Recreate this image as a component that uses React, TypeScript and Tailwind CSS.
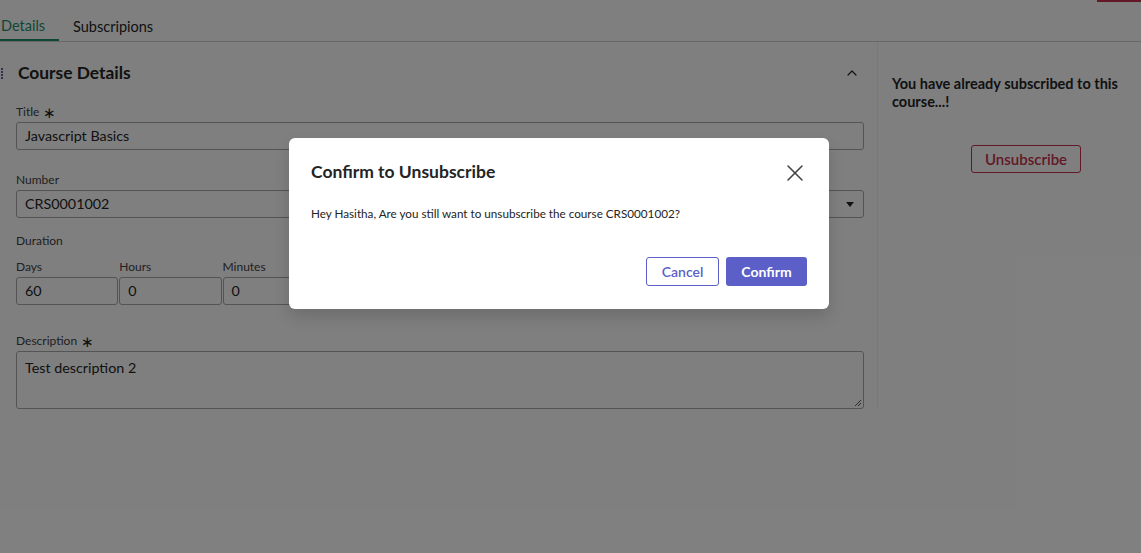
import { X, ChevronUp } from "lucide-react";

const Label = ({ text, required }: { text: string; required?: boolean }) => (
  <div className="flex items-center gap-1 text-[12px] leading-[16px] text-[#424242]">
    <span>{text}</span>
    {required && <span className="text-[15px] leading-none text-[#242424]">∗</span>}
  </div>
);

const Field = ({ value, className = "" }: { value: string; className?: string }) => (
  <div
    className={`h-[28px] rounded-[3px] border border-[#a8a8a8] bg-white px-2 text-[14.3px] leading-[26px] text-[#242424] ${className}`}
  >
    {value}
  </div>
);

const App = () => {
  return (
    <div className="relative h-[553px] w-[1141px] overflow-hidden bg-white font-['Lato','Noto_Sans',sans-serif] text-[#242424]">
      {/* top bar */}
      <div className="absolute right-0 top-0 h-[2px] w-[44px] bg-[#c4314b]" />
      <div className="flex h-[42px] items-end border-b border-[#cfcfcf]">
        <div className="flex h-[41px] w-[59px] items-center border-b-2 border-[#1f8f6b] pl-[1px] pt-[12px] text-[14.5px] text-[#1f8f6b]">
          Details
        </div>
        <div className="flex h-[41px] items-center pl-[14px] pt-[12px] text-[14.5px] text-[#242424]">Subscripions</div>
      </div>

      <div className="flex">
        {/* left panel */}
        <div className="w-[878px] border-r border-[#f0f0f0] pr-[13px]">
          <div className="flex h-[62px] items-center">
            <div className="grid w-[18px] grid-cols-1 gap-[1px] pl-[1px]">
              <span className="h-[2px] w-[2px] bg-[#6264a7]" />
              <span className="h-[2px] w-[2px] bg-[#6264a7]" />
              <span className="h-[2px] w-[2px] bg-[#6264a7]" />
              <span className="h-[2px] w-[2px] bg-[#6264a7]" />
            </div>
            <h2 className="flex-1 text-[17.4px] font-bold text-[#242424]">Course Details</h2>
            <ChevronUp className="mr-[4px] h-[16px] w-[16px] text-[#242424]" strokeWidth={1.8} />
          </div>

          <div className="flex flex-col pl-[16px]">
            <div>
              <Label text="Title" required />
              <Field value="Javascript Basics" className="mt-[2px]" />
            </div>

            <div className="mt-[22px]">
              <Label text="Number" />
              <div className="mt-[2px] flex h-[28px] items-center justify-between rounded-[3px] border border-[#a8a8a8] bg-white px-2 text-[14.3px] text-[#242424]">
                <span>CRS0001002</span>
                <span className="mr-[1px] h-0 w-0 border-x-[4px] border-t-[5px] border-x-transparent border-t-[#242424]" />
              </div>
            </div>

            <div className="mt-[15px]">
              <Label text="Duration" />
            </div>

            <div className="mt-[10px] grid w-[412px] grid-cols-4 gap-[1px]">
              {[
                ["Days", "60"],
                ["Hours", "0"],
                ["Minutes", "0"],
                ["", ""],
              ].map(([l, v], i) =>
                l ? (
                  <div key={i}>
                    <Label text={l} />
                    <Field value={v} className="mt-[2px]" />
                  </div>
                ) : (
                  <div key={i} />
                )
              )}
            </div>

            <div className="mt-[28px]">
              <Label text="Description" required />
              <div className="relative mt-[2px] h-[58px] rounded-[3px] border border-[#a8a8a8] bg-white px-2 pt-[6px] text-[14.3px] leading-[20px] text-[#242424]">
                Test description 2
                <svg className="absolute bottom-[1px] right-[1px]" width="8" height="8" viewBox="0 0 8 8">
                  <path d="M7 1 L1 7 M7 4 L4 7" stroke="#555" strokeWidth="1" />
                </svg>
              </div>
            </div>
          </div>
        </div>

        {/* right panel */}
        <div className="flex-1 px-[14px] pt-[33px]">
          <p className="text-[14.5px] font-bold leading-[18px] text-[#242424]">
            You have already subscribed to this course...!
          </p>
          <div className="mt-[34px] flex justify-center pl-[33px]">
            <button className="h-[28px] w-[110px] rounded-[3px] border border-[#c4314b] bg-white text-[15px] font-semibold text-[#c4314b]">
              Unsubscribe
            </button>
          </div>
        </div>
      </div>

      {/* overlay */}
      <div className="absolute inset-0 bg-black/50" />

      {/* dialog */}
      <div className="absolute left-[289px] top-[138px] flex h-[171px] w-[540px] flex-col rounded-[6px] bg-white px-[22px] shadow-[0_8px_16px_rgba(0,0,0,0.14)]">
        <div className="flex h-[68px] items-center justify-between pt-[1px]">
          <h3 className="text-[17.5px] font-bold text-[#242424]">Confirm to Unsubscribe</h3>
          <X className="mr-[-2px] h-[28px] w-[28px] text-[#424242]" strokeWidth={1.3} />
        </div>
        <p className="mt-[-1px] text-[11.7px] leading-[16px] text-[#242424]">
          Hey Hasitha, Are you still want to unsubscribe the course CRS0001002?
        </p>
        <div className="mt-[36px] flex justify-end gap-[7px]">
          <button className="h-[29px] w-[73px] rounded-[3px] border border-[#5b5fc7] bg-white text-[14px] font-semibold text-[#5b5fc7]">
            Cancel
          </button>
          <button className="h-[29px] w-[81px] rounded-[3px] bg-[#5b5fc7] text-[14px] font-bold text-white">
            Confirm
          </button>
        </div>
      </div>
    </div>
  );
};

export default App;
